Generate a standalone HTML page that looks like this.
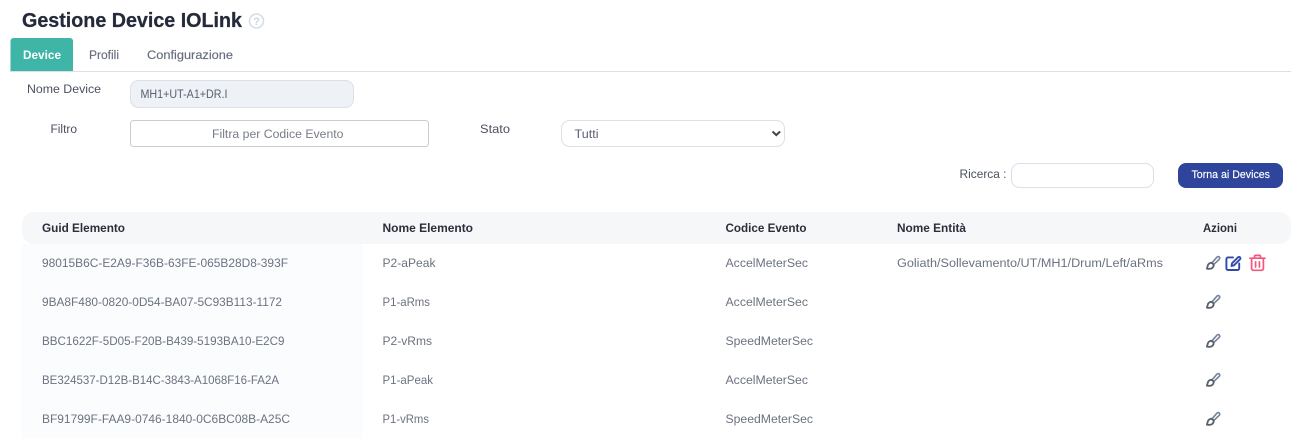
<!DOCTYPE html>
<html><head><meta charset="utf-8"><title>Gestione Device IOLink</title>
<style>
html,body{margin:0;padding:0;width:1291px;height:438px;overflow:hidden;background:#fff}
svg{display:block}
text{font-family:"Liberation Sans",sans-serif;font-size:12.4px;fill:#6b7280}
.h{font-weight:700;fill:#2b2f3d;font-size:12.2px}
.l{fill:#4b5060}
</style></head><body>
<svg width="1291" height="438" viewBox="0 0 1291 438" xmlns="http://www.w3.org/2000/svg">
<defs>
<g id="brush" fill="none" stroke-linecap="round" stroke-linejoin="round">
<path d="M6.2 8.2 L11.4 2.2 Q12.6 1 13.8 2 Q14.8 3.2 13.6 4.4 L8 9.8" stroke="#75849c" stroke-width="1.6"/>
<path d="M5.4 7.8 Q2.6 8.6 2.2 11 L1.4 13.6 Q5 14.4 7 12.8 Q8.6 11 8 9.6 Q7 7.8 5.4 7.8 Z" stroke="#5b5f69" stroke-width="1.8"/>
</g>
</defs>

<text x="22" y="27" textLength="220" lengthAdjust="spacingAndGlyphs" style="font-size:20px;font-weight:700;fill:#252a3a;stroke:#252a3a;stroke-width:.25">Gestione Device IOLink</text>
<circle cx="256.5" cy="21" r="7" fill="none" stroke="#d5ddea" stroke-width="1.6"/>
<text x="253.3" y="24.8" style="font-size:11px;font-weight:700;fill:#cdd6e3">?</text>

<path d="M10.5 72V41a3 3 0 0 1 3-3H70a3 3 0 0 1 3 3V72Z" fill="#3eb5a6"/>
<rect x="10" y="71" width="1281" height="1" fill="#dcdfe4"/>
<text x="23" y="59" textLength="38" lengthAdjust="spacingAndGlyphs" style="font-weight:700;fill:#fff;font-size:12px">Device</text>
<text x="89" y="59" textLength="30" lengthAdjust="spacingAndGlyphs" style="fill:#666c7e;stroke:#666c7e;stroke-width:.15">Profili</text>
<text x="147" y="59" textLength="86" lengthAdjust="spacingAndGlyphs" style="fill:#666c7e;stroke:#666c7e;stroke-width:.15">Configurazione</text>

<text class="l" x="27" y="93" textLength="74" lengthAdjust="spacingAndGlyphs">Nome Device</text>
<rect x="130.5" y="80.5" width="223" height="27" rx="8" fill="#eef1f6" stroke="#d8e0ea"/>
<text x="140.5" y="98" textLength="87" lengthAdjust="spacingAndGlyphs" style="fill:#596070">MH1+UT-A1+DR.I</text>

<text class="l" x="50.5" y="133" textLength="26.5" lengthAdjust="spacingAndGlyphs">Filtro</text>
<rect x="130.5" y="120.5" width="298" height="26" rx="3" fill="#fff" stroke="#c9ccd1"/>
<text x="212" y="138" textLength="131.5" lengthAdjust="spacingAndGlyphs" style="fill:#777c88">Filtra per Codice Evento</text>

<text class="l" x="480" y="133" textLength="30" lengthAdjust="spacingAndGlyphs">Stato</text>
<rect x="561.5" y="120.5" width="223" height="26" rx="8" fill="#fff" stroke="#d8e0ea"/>
<text x="574.5" y="138" textLength="24" lengthAdjust="spacingAndGlyphs" style="fill:#596070">Tutti</text>
<path d="M772.5 131.5l3.8 3.6 3.8-3.6" fill="none" stroke="#444" stroke-width="2"/>

<text class="l" x="959.5" y="178" textLength="47" lengthAdjust="spacingAndGlyphs">Ricerca :</text>
<rect x="1011.5" y="163.5" width="142" height="24" rx="8" fill="#fff" stroke="#d8e0ea"/>
<rect x="1178" y="163" width="105" height="25" rx="8" fill="#2f459c"/>
<text x="1191.5" y="178" textLength="78.5" lengthAdjust="spacingAndGlyphs" style="fill:#fff;stroke:#fff;stroke-width:.15;font-size:11.2px">Torna ai Devices</text>

<rect x="22" y="244" width="340" height="194" fill="#fbfcfe"/>
<rect x="22" y="212" width="1269" height="32" rx="12" fill="#f6f7f9"/>
<text class="h" x="42" y="232" textLength="83" lengthAdjust="spacingAndGlyphs">Guid Elemento</text>
<text class="h" x="382.5" y="232" textLength="90.5" lengthAdjust="spacingAndGlyphs">Nome Elemento</text>
<text class="h" x="725.5" y="232" textLength="81" lengthAdjust="spacingAndGlyphs">Codice Evento</text>
<text class="h" x="897" y="232" textLength="69" lengthAdjust="spacingAndGlyphs">Nome Entità</text>
<text class="h" x="1203" y="232" textLength="34" lengthAdjust="spacingAndGlyphs">Azioni</text>

<text x="42" y="267" textLength="246" lengthAdjust="spacingAndGlyphs">98015B6C-E2A9-F36B-63FE-065B28D8-393F</text>
<text x="382.5" y="267" textLength="53" lengthAdjust="spacingAndGlyphs">P2-aPeak</text>
<text x="725.5" y="267" textLength="82.5" lengthAdjust="spacingAndGlyphs">AccelMeterSec</text>
<text x="897" y="267" textLength="266" lengthAdjust="spacingAndGlyphs">Goliath/Sollevamento/UT/MH1/Drum/Left/aRms</text>

<text x="42" y="306" textLength="240" lengthAdjust="spacingAndGlyphs">9BA8F480-0820-0D54-BA07-5C93B113-1172</text>
<text x="382.5" y="306" textLength="47.5" lengthAdjust="spacingAndGlyphs">P1-aRms</text>
<text x="725.5" y="306" textLength="82.5" lengthAdjust="spacingAndGlyphs">AccelMeterSec</text>

<text x="42" y="345" textLength="242.5" lengthAdjust="spacingAndGlyphs">BBC1622F-5D05-F20B-B439-5193BA10-E2C9</text>
<text x="382.5" y="345" textLength="49.5" lengthAdjust="spacingAndGlyphs">P2-vRms</text>
<text x="725.5" y="345" textLength="87.5" lengthAdjust="spacingAndGlyphs">SpeedMeterSec</text>

<text x="42" y="384" textLength="237" lengthAdjust="spacingAndGlyphs">BE324537-D12B-B14C-3843-A1068F16-FA2A</text>
<text x="382.5" y="384" textLength="50.5" lengthAdjust="spacingAndGlyphs">P1-aPeak</text>
<text x="725.5" y="384" textLength="82.5" lengthAdjust="spacingAndGlyphs">AccelMeterSec</text>

<text x="42" y="423" textLength="248" lengthAdjust="spacingAndGlyphs">BF91799F-FAA9-0746-1840-0C6BC08B-A25C</text>
<text x="382.5" y="423" textLength="46.5" lengthAdjust="spacingAndGlyphs">P1-vRms</text>
<text x="725.5" y="423" textLength="87.5" lengthAdjust="spacingAndGlyphs">SpeedMeterSec</text>

<use href="#brush" x="1205.5" y="255"/>
<use href="#brush" x="1205.5" y="294"/>
<use href="#brush" x="1205.5" y="333"/>
<use href="#brush" x="1205.5" y="372"/>
<use href="#brush" x="1205.5" y="411"/>

<g fill="none" stroke="#3349a8" stroke-width="1.9" stroke-linecap="round" stroke-linejoin="round">
<path d="M1233 257.4h-5a1.6 1.6 0 0 0-1.6 1.6v9.4a1.6 1.6 0 0 0 1.6 1.6h9.6a1.6 1.6 0 0 0 1.6-1.6v-5"/>
<path d="M1231.5 266l.5-2.7 6-6a1.4 1.4 0 0 1 2 2l-6 6Z"/>
</g>
<g fill="none" stroke="#f4567d" stroke-width="1.7" stroke-linecap="round" stroke-linejoin="round">
<path d="M1250 258.2h15"/>
<path d="M1254.5 258v-1.4a1.2 1.2 0 0 1 1.2-1.2h3.6a1.2 1.2 0 0 1 1.2 1.2v1.4"/>
<path d="M1251.6 258.5v10a1.8 1.8 0 0 0 1.8 1.8h8.2a1.8 1.8 0 0 0 1.8-1.8v-10"/>
<path d="M1255.6 261.8v5.2M1259.4 261.8v5.2"/>
</g>
</svg>
</body></html>
